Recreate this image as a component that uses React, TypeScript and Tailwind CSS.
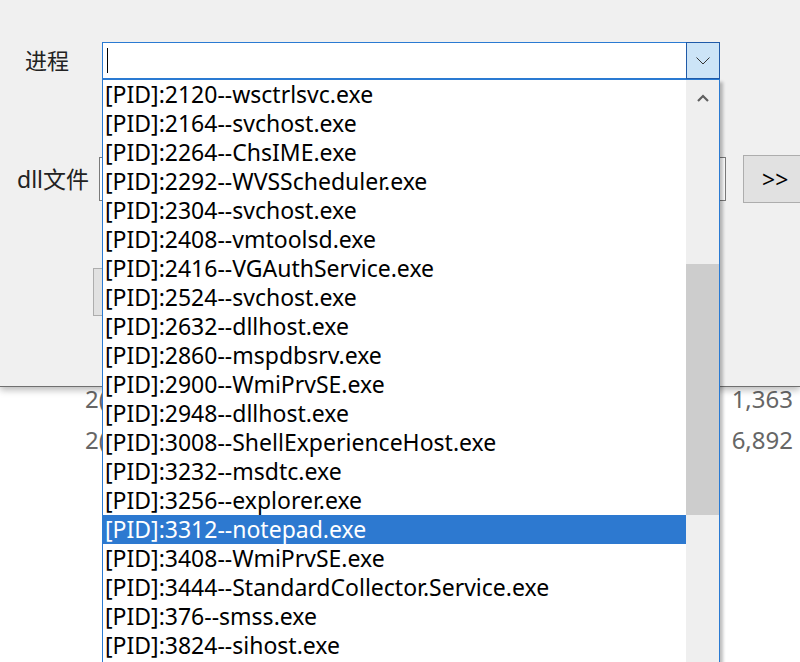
import React from "react";

const items = [
  "[PID]:2120--wsctrlsvc.exe",
  "[PID]:2164--svchost.exe",
  "[PID]:2264--ChsIME.exe",
  "[PID]:2292--WVSScheduler.exe",
  "[PID]:2304--svchost.exe",
  "[PID]:2408--vmtoolsd.exe",
  "[PID]:2416--VGAuthService.exe",
  "[PID]:2524--svchost.exe",
  "[PID]:2632--dllhost.exe",
  "[PID]:2860--mspdbsrv.exe",
  "[PID]:2900--WmiPrvSE.exe",
  "[PID]:2948--dllhost.exe",
  "[PID]:3008--ShellExperienceHost.exe",
  "[PID]:3232--msdtc.exe",
  "[PID]:3256--explorer.exe",
  "[PID]:3312--notepad.exe",
  "[PID]:3408--WmiPrvSE.exe",
  "[PID]:3444--StandardCollector.Service.exe",
  "[PID]:376--smss.exe",
  "[PID]:3824--sihost.exe",
];

export default function App() {
  return (
    <div className="relative w-[800px] h-[662px] overflow-hidden bg-white font-['Noto_Sans','Noto_Sans_CJK_SC',sans-serif]">
      {/* dialog */}
      <div className="relative z-10 h-[387px] bg-[#f0f0f0] border-b border-[#707070] shadow-[0_3px_7px_rgba(0,0,0,0.28)]">
        <div className="flex items-center pt-[42px]">
          <div className="w-[102px] shrink-0 pl-[25px] text-[22px] leading-[37px] text-[#222]">进程</div>
          <div className="flex h-[37px] w-[618px] shrink-0 border border-[#2a7ad2] bg-white">
            <div className="flex-1 flex items-center pl-[4px]">
              <div className="w-px h-[25px] bg-black" />
            </div>
            <div className="w-[34px] -my-px -mr-px flex items-center justify-center bg-[#cce4f7] border border-[#1f5aa8]">
              <svg width="14" height="8" viewBox="0 0 14 8">
                <path d="M0.5 0.5 L7 7 L13.5 0.5" fill="none" stroke="#333" strokeWidth="1" />
              </svg>
            </div>
          </div>
        </div>
        <div className="flex items-center mt-[76px]">
          <div className="w-[99px] shrink-0 pl-[17px] text-[23px] text-[#222]">dll文件</div>
          <div className="h-[44px] w-[627px] shrink-0 border border-[#7a7a7a] bg-white" />
          <div className="ml-[17px] h-[48px] w-[70px] shrink-0 border border-[#adadad] bg-[#e1e1e1] flex items-center pl-[18px] text-[23px] text-black">
            &gt;&gt;
          </div>
        </div>
        <div className="mt-[65px] ml-[93px] h-[48px] w-[300px] border border-[#adadad] bg-[#e1e1e1]" />
      </div>

      {/* table below */}
      <div className="text-[24px] text-[#666]">
        <div className="flex h-[41px] items-center justify-between pl-[85px] pr-[7px] mt-[-9px]">
          <span>2(</span>
          <span>1,363</span>
        </div>
        <div className="flex h-[41px] items-center justify-between pl-[85px] pr-[7px]">
          <span>2(</span>
          <span>6,892</span>
        </div>
      </div>

      {/* dropdown list */}
      <div className="absolute z-20 left-[102px] top-[79px] w-[618px] h-[600px] bg-white border-x border-[#2a7ad2] border-t border-t-[#2a7ad2] shadow-[3px_3px_3px_rgba(0,0,0,0.25)] flex">
        <div className="flex-1 flex flex-col">
          {items.map((t, i) => (
            <div
              key={t}
              className={
                i === 15
                  ? "h-[29px] flex items-center pl-[2px] text-[23px] bg-[#2d79d0] text-white"
                  : "h-[29px] flex items-center pl-[2px] text-[23px] text-black"
              }
            >
              {t}
            </div>
          ))}
        </div>
        <div className="w-[33px] bg-[#efefef] flex flex-col">
          <div className="h-[35px] flex items-center justify-center">
            <svg width="12" height="8" viewBox="0 0 12 8">
              <path d="M1 7 L6 2 L11 7" fill="none" stroke="#606060" strokeWidth="2.2" />
            </svg>
          </div>
          <div className="mt-[149px] h-[251px] bg-[#cdcdcd]" />
        </div>
      </div>
    </div>
  );
}
